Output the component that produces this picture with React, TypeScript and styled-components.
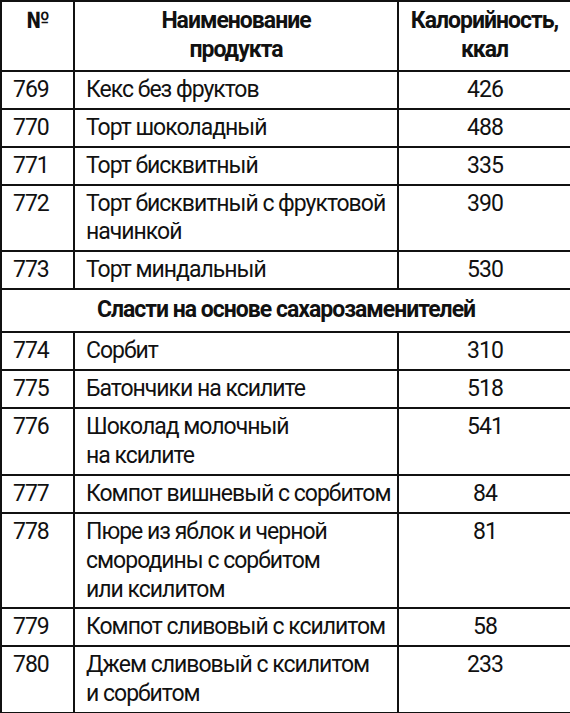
import React from 'react';
import styled, { createGlobalStyle } from 'styled-components';

const GlobalStyle = createGlobalStyle`
  html, body {
    margin: 0;
    padding: 0;
    background: #fff;
  }
  body {
    font-family: Roboto, "Liberation Sans", sans-serif;
    color: #111;
  }
`;

const Table = styled.table`
  width: 570px;
  border-collapse: collapse;
  table-layout: fixed;
  font-size: 23px;
  line-height: 28.9px;
  letter-spacing: -1px;
  border: 2px solid #111;
`;

const HeadCell = styled.th`
  border: 2px solid #111;
  padding: 5px 4px 5px;
  font-weight: 700;
  text-align: center;
  vertical-align: top;
`;

const Cell = styled.td<{ $center?: boolean }>`
  border: 2px solid #111;
  padding: 4px 10px 3px 11px;
  vertical-align: top;
  text-align: ${p => (p.$center ? 'center' : 'left')};
  white-space: nowrap;
`;

const SectionCell = styled.td`
  border: 2px solid #111;
  padding: 6px 8px 6px;
  font-weight: 700;
  text-align: center;
`;

type Item = { n: number; name: string[]; kcal: number };

const cakes: Item[] = [
  { n: 769, name: ['Кекс без фруктов'], kcal: 426 },
  { n: 770, name: ['Торт шоколадный'], kcal: 488 },
  { n: 771, name: ['Торт бисквитный'], kcal: 335 },
  { n: 772, name: ['Торт бисквитный с фруктовой', 'начинкой'], kcal: 390 },
  { n: 773, name: ['Торт миндальный'], kcal: 530 },
];

const sweets: Item[] = [
  { n: 774, name: ['Сорбит'], kcal: 310 },
  { n: 775, name: ['Батончики на ксилите'], kcal: 518 },
  { n: 776, name: ['Шоколад молочный', 'на ксилите'], kcal: 541 },
  { n: 777, name: ['Компот вишневый с сорбитом'], kcal: 84 },
  { n: 778, name: ['Пюре из яблок и черной', 'смородины с сорбитом', 'или ксилитом'], kcal: 81 },
  { n: 779, name: ['Компот сливовый с ксилитом'], kcal: 58 },
  { n: 780, name: ['Джем сливовый с ксилитом', 'и сорбитом'], kcal: 233 },
];

const Row = ({ item }: { item: Item }) => (
  <tr>
    <Cell>{item.n}</Cell>
    <Cell>
      {item.name.map((line, i) => (
        <React.Fragment key={i}>
          {i > 0 && <br />}
          {line}
        </React.Fragment>
      ))}
    </Cell>
    <Cell $center>{item.kcal}</Cell>
  </tr>
);

export default function App() {
  return (
    <>
      <GlobalStyle />
      <Table>
        <colgroup>
          <col style={{ width: 73 }} />
          <col style={{ width: 324 }} />
          <col style={{ width: 173 }} />
        </colgroup>
        <thead>
          <tr>
            <HeadCell>№</HeadCell>
            <HeadCell>Наименование<br />продукта</HeadCell>
            <HeadCell>Калорийность,<br />ккал</HeadCell>
          </tr>
        </thead>
        <tbody>
          {cakes.map(item => <Row key={item.n} item={item} />)}
          <tr>
            <SectionCell colSpan={3}>Сласти на основе сахарозаменителей</SectionCell>
          </tr>
          {sweets.map(item => <Row key={item.n} item={item} />)}
        </tbody>
      </Table>
    </>
  );
}
